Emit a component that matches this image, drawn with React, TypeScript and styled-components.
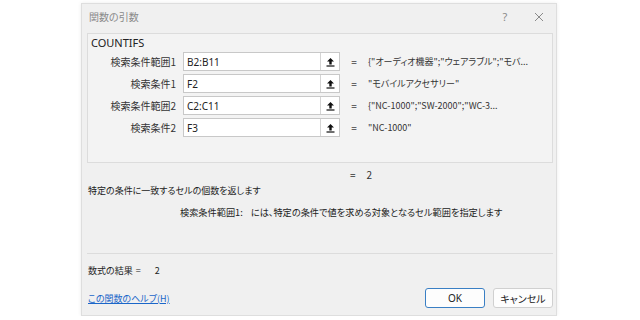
import styled, { createGlobalStyle } from "styled-components";

const GlobalStyle = createGlobalStyle`
  html, body {
    margin: 0;
    padding: 0;
    background: #ffffff;
  }
  body {
    font-family: "Noto Sans CJK JP", "Noto Sans", sans-serif;
    font-size: 10px;
    font-feature-settings: "palt";
    color: #222;
  }
`;

const Dialog = styled.div`
  box-sizing: border-box;
  margin: 3px 0 0 81px;
  width: 476px;
  height: 313px;
  background: #f0f0f0;
  border: 1px solid #dedede;
  box-shadow: 0 0 4px rgba(0, 0, 0, 0.08);
  display: flex;
  flex-direction: column;
  padding: 0 3px 0 5px;
`;

const TitleBar = styled.div`
  height: 25px;
  display: flex;
  align-items: center;
  padding-left: 2px;
  margin-right: -3px;
  color: #8a8a8a;
  font-size: 10px;
`;

const TitleText = styled.span`
  flex: 1;
`;

const TitleButton = styled.span`
  width: 34px;
  display: flex;
  justify-content: center;
  color: #8a8a8a;
  font-family: "Noto Sans", sans-serif;
  font-size: 11px;
`;

const GroupBox = styled.div`
  box-sizing: border-box;
  margin-top: 4px;
  height: 130px;
  border: 1px solid #dcdcdc;
  background: #f3f3f3;
  padding: 2px 0 0 8px;
`;

const Legend = styled.div`
  font-family: "Noto Sans", "Noto Sans CJK JP", sans-serif;
  font-size: 11px;
  line-height: 14px;
  color: #222;
  margin-left: -5px;
`;

const Rows = styled.div`
  margin-top: 2px;
  display: grid;
  grid-template-columns: 80px 157px 14px 1fr;
  column-gap: 7px;
  row-gap: 3px;
  align-items: center;
`;

const Label = styled.div`
  text-align: right;
  color: #333;
  font-size: 10px;
  line-height: 19px;
  white-space: nowrap;
`;

const Input = styled.div`
  box-sizing: border-box;
  height: 19px;
  border: 1px solid #c8c8c8;
  background: #fff;
  display: flex;
  align-items: center;
`;

const InputText = styled.span`
  flex: 1;
  padding-left: 3px;
  font-family: "Noto Sans", sans-serif;
  font-size: 10px;
  color: #222;
`;

const RefButton = styled.span`
  width: 18px;
  height: 100%;
  border-left: 1px solid #d4d4d4;
  display: flex;
  align-items: center;
  justify-content: center;
`;

const Eq = styled.span`
  text-align: center;
  color: #444;
  font-size: 10px;
`;

const Value = styled.span`
  color: #333;
  font-size: 9px;
  white-space: nowrap;
`;

const ResultLine = styled.div`
  margin-top: 5px;
  line-height: 14px;
  padding-left: 263px;
  color: #333;
`;

const Line = styled.div<{ $top: number; $indent?: number; $size?: number }>`
  margin-top: ${(p) => p.$top}px;
  line-height: 14px;
  padding-left: ${(p) => p.$indent ?? 1}px;
  font-size: ${(p) => p.$size ?? 9}px;
  color: #222;
  white-space: nowrap;
`;

const ArgName = styled.span`
  color: #222;
  margin-right: 8px;
`;

const Gap = styled.span<{ $w: number }>`
  display: inline-block;
  width: ${(p) => p.$w}px;
`;

const Separator = styled.div`
  margin-top: 34px;
  height: 1px;
  background: #dcdcdc;
`;

const Footer = styled.div`
  margin-top: 10px;
  height: 20px;
  display: flex;
  align-items: center;
  padding-left: 1px;
`;

const HelpLink = styled.a`
  flex: 1;
  color: #1a66c9;
  text-decoration: underline;
  font-size: 9px;
`;

const Button = styled.button<{ $primary?: boolean }>`
  box-sizing: border-box;
  width: 60px;
  height: 20px;
  margin-left: 8px;
  border-radius: 3px;
  background: #fdfdfd;
  border: 1px solid ${(p) => (p.$primary ? "#3a7fc4" : "#d0d0d0")};
  font-family: "Noto Sans", "Noto Sans CJK JP", sans-serif;
  font-feature-settings: "palt";
  font-size: 10px;
  color: #222;
  padding: 0;
`;

function RefIcon() {
  return (
    <svg width="9" height="10" viewBox="0 0 9 10">
      <path d="M4.5 1 L1 4.5 H3.3 V7.5 H5.7 V4.5 H8 Z" fill="#111" />
      <rect x="0.5" y="8.4" width="8" height="1.2" fill="#111" />
    </svg>
  );
}

function CloseIcon() {
  return (
    <svg width="10" height="10" viewBox="0 0 10 10">
      <path d="M1 1 L9 9 M9 1 L1 9" stroke="#8a8a8a" strokeWidth="1" />
    </svg>
  );
}

const args = [
  { label: "検索条件範囲1", ref: "B2:B11", value: '{"オーディオ機器";"ウェアラブル";"モバ...' },
  { label: "検索条件1", ref: "F2", value: '"モバイルアクセサリー"' },
  { label: "検索条件範囲2", ref: "C2:C11", value: '{"NC-1000";"SW-2000";"WC-3...' },
  { label: "検索条件2", ref: "F3", value: '"NC-1000"' },
];

export default function App() {
  return (
    <>
      <GlobalStyle />
      <Dialog>
        <TitleBar>
          <TitleText>関数の引数</TitleText>
          <TitleButton>?</TitleButton>
          <TitleButton>
            <CloseIcon />
          </TitleButton>
        </TitleBar>
        <GroupBox>
          <Legend>COUNTIFS</Legend>
          <Rows>
            {args.map((a) => (
              <>
                <Label key={a.label}>{a.label}</Label>
                <Input>
                  <InputText>{a.ref}</InputText>
                  <RefButton>
                    <RefIcon />
                  </RefButton>
                </Input>
                <Eq>=</Eq>
                <Value>{a.value}</Value>
              </>
            ))}
          </Rows>
        </GroupBox>
        <ResultLine>
          =<Gap $w={11} />2
        </ResultLine>
        <Line $top={2}>特定の条件に一致するセルの個数を返します</Line>
        <Line $top={7} $indent={93} $size={9.2}>
          <ArgName>検索条件範囲1:</ArgName>
          には、特定の条件で値を求める対象となるセル範囲を指定します
        </Line>
        <Separator />
        <Line $top={10}>
          数式の結果<Gap $w={3} />=<Gap $w={14} />2
        </Line>
        <Footer>
          <HelpLink href="#">この関数のヘルプ(H)</HelpLink>
          <Button $primary>OK</Button>
          <Button>キャンセル</Button>
        </Footer>
      </Dialog>
    </>
  );
}
